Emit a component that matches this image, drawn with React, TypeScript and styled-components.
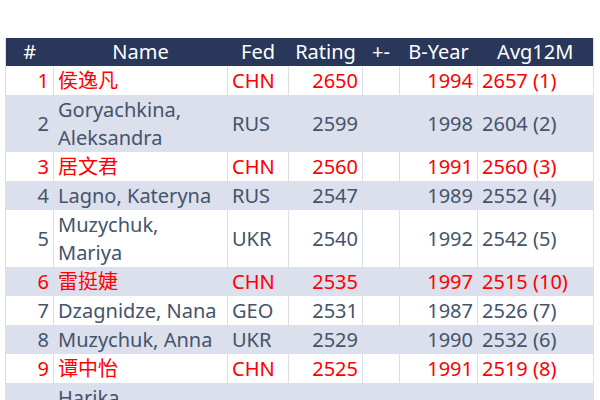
import React from "react";
import styled, { createGlobalStyle } from "styled-components";

const GlobalStyle = createGlobalStyle`
  html, body {
    margin: 0;
    padding: 0;
    background: #ffffff;
  }
`;

type Player = {
  rank: number;
  name: string[];
  fed: string;
  rating: number;
  change: string;
  born: number;
  avg: string;
  chn: boolean;
};

const players: Player[] = [
  { rank: 1, name: ["侯逸凡"], fed: "CHN", rating: 2650, change: "", born: 1994, avg: "2657 (1)", chn: true },
  { rank: 2, name: ["Goryachkina,", "Aleksandra"], fed: "RUS", rating: 2599, change: "", born: 1998, avg: "2604 (2)", chn: false },
  { rank: 3, name: ["居文君"], fed: "CHN", rating: 2560, change: "", born: 1991, avg: "2560 (3)", chn: true },
  { rank: 4, name: ["Lagno, Kateryna"], fed: "RUS", rating: 2547, change: "", born: 1989, avg: "2552 (4)", chn: false },
  { rank: 5, name: ["Muzychuk,", "Mariya"], fed: "UKR", rating: 2540, change: "", born: 1992, avg: "2542 (5)", chn: false },
  { rank: 6, name: ["雷挺婕"], fed: "CHN", rating: 2535, change: "", born: 1997, avg: "2515 (10)", chn: true },
  { rank: 7, name: ["Dzagnidze, Nana"], fed: "GEO", rating: 2531, change: "", born: 1987, avg: "2526 (7)", chn: false },
  { rank: 8, name: ["Muzychuk, Anna"], fed: "UKR", rating: 2529, change: "", born: 1990, avg: "2532 (6)", chn: false },
  { rank: 9, name: ["谭中怡"], fed: "CHN", rating: 2525, change: "", born: 1991, avg: "2519 (8)", chn: true },
  { rank: 10, name: ["Harika,", "Dronavalli"], fed: "IND", rating: 2511, change: "", born: 1986, avg: "2514 (9)", chn: false },
];

const Page = styled.div`
  padding: 38px 0 0 5px;
  font-family: "Noto Sans", "Noto Sans CJK SC", sans-serif;
`;

const Table = styled.table`
  width: 588px;
  table-layout: fixed;
  border-collapse: collapse;
  font-size: 20px;
  border-left: 1px solid #dcdfe8;
  border-right: 1px solid #dcdfe8;
`;

const HeadCell = styled.th`
  background: #28375a;
  color: #ffffff;
  font-weight: normal;
  text-align: center;
  height: 28px;
  line-height: 28px;
  padding: 0 4px;
  white-space: nowrap;
`;

const Row = styled.tr<{ $band: boolean; $red: boolean }>`
  background: ${(p) => (p.$band ? "#dcdfec" : "#ffffff")};
  color: ${(p) => (p.$red ? "#ff0000" : "#44546a")};
`;

const Cell = styled.td<{ $align?: "left" | "right" | "center" }>`
  text-align: ${(p) => p.$align || "left"};
  vertical-align: middle;
  line-height: 28px;
  padding: 1px 4px 0;
  white-space: nowrap;
  border-left: 1px solid #dcdfe8;
  overflow: hidden;
`;

const widths = [48, 174, 61, 74, 37, 78, 116];
const headers = ["#", "Name", "Fed", "Rating", "+-", "B-Year", "Avg12M"];

export default function App() {
  return (
    <>
      <GlobalStyle />
      <Page>
        <Table>
          <colgroup>
            {widths.map((w, i) => (
              <col key={i} style={{ width: w }} />
            ))}
          </colgroup>
          <thead>
            <tr>
              {headers.map((h) => (
                <HeadCell key={h}>{h}</HeadCell>
              ))}
            </tr>
          </thead>
          <tbody>
            {players.map((p, i) => (
              <Row key={p.rank} $band={i % 2 === 1} $red={p.chn}>
                <Cell $align="right">{p.rank}</Cell>
                <Cell>
                  {p.name.map((line, j) => (
                    <React.Fragment key={j}>
                      {j > 0 && <br />}
                      {line}
                    </React.Fragment>
                  ))}
                </Cell>
                <Cell>{p.fed}</Cell>
                <Cell $align="right">{p.rating}</Cell>
                <Cell>{p.change}</Cell>
                <Cell $align="right">{p.born}</Cell>
                <Cell>{p.avg}</Cell>
              </Row>
            ))}
          </tbody>
        </Table>
      </Page>
    </>
  );
}
